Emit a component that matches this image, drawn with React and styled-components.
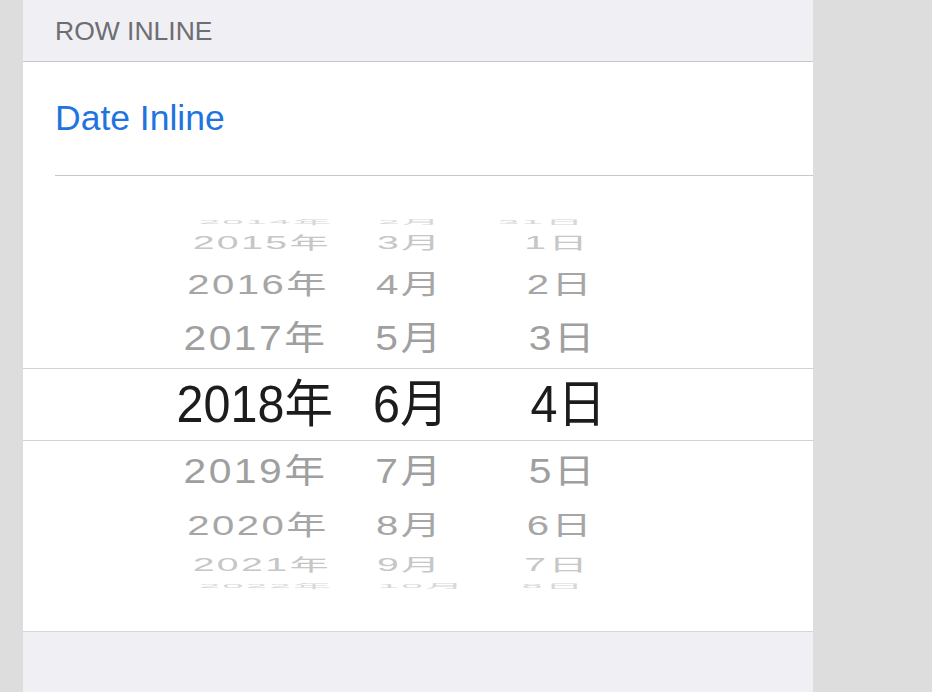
import React from 'react';
import styled, { createGlobalStyle } from 'styled-components';

const GlobalStyle = createGlobalStyle`
  html, body { margin: 0; padding: 0; background: #dddddd; }
  body { font-family: "Liberation Sans", "Noto Sans CJK JP", sans-serif; }
  * { box-sizing: border-box; }
`;

const Page = styled.div`
  width: 932px;
  height: 692px;
  background: #dddddd;
  overflow: hidden;
  display: flex;
`;

const Panel = styled.div`
  margin-left: 23px;
  width: 790px;
  height: 100%;
  background: #efeff4;
  display: flex;
  flex-direction: column;
`;

const SectionHeader = styled.div`
  height: 62px;
  border-bottom: 1px solid #c8c7cc;
  display: flex;
  align-items: center;
  padding-left: 32px;
  padding-top: 1px;
  font-size: 26.5px;
  color: #6d6d72;
`;

const Section = styled.div`
  background: #ffffff;
  border-bottom: 1px solid #d6d6da;
`;

const Cell = styled.div`
  height: 113px;
  display: flex;
  align-items: center;
  padding-left: 32px;
  font-size: 35.5px;
  color: #1f74de;
`;

const Separator = styled.div`
  height: 1px;
  margin-left: 32px;
  background: #c8c7cc;
`;

const Picker = styled.div`
  height: 455px;
  padding: 41px 0 39px;
`;

const Wheel = styled.div`
  height: 375px;
  overflow: hidden;
  display: flex;
  flex-direction: column;
`;

const WheelRow = styled.div`
  flex: 0 0 auto;
  display: flex;
  align-items: center;
  ${p => p.$selected && `
    border-top: 1px solid #d1d1d6;
    border-bottom: 1px solid #d1d1d6;
  `}
`;

const RowContent = styled.div`
  flex: 0 0 auto;
  width: 100%;
  display: grid;
  grid-template-columns: ${p => (p.$selected ? '310px 163px 110px 1fr' : '304px 168px 103px 1fr')};
  align-items: center;
  line-height: 1;
  white-space: nowrap;
  font-size: ${p => (p.$selected ? '48.5px' : '41px')};
  letter-spacing: ${p => (p.$selected ? '0' : '2.5px')};
  color: ${p => p.$color};
  transform-origin: 50% 50%;
`;

const YearCell = styled.span`
  text-align: right;
`;

const MonthCell = styled.span`
  text-align: left;
  padding-left: ${p => (p.$selected ? '40px' : '48px')};
`;

const DayCell = styled.span`
  text-align: right;
`;

const R = 183;
const STEP = 20;
const D = 2000;
const rad = d => (d * Math.PI) / 180;
const GREYS = { 20: '#9f9f9f', 40: '#a6a6a6', 60: '#c6c6c6', 80: '#d8d8d8' };

const days = [31, 1, 2, 3, 4, 5, 6, 7, 8];

const rows = [-4, -3, -2, -1, 0, 1, 2, 3, 4].map((i, idx) => {
  const a = Math.abs(i * STEP);
  const selected = i === 0;
  const height = selected ? 73 : R * (Math.sin(rad(a + 10)) - Math.sin(rad(a - 10)));
  const sx = D / (D + R * (1 - Math.cos(rad(a))));
  const sy = 0.9 * Math.cos(rad(a)) * sx;
  return {
    key: i,
    selected,
    height,
    transform: selected ? 'scaleY(1.05)' : `scale(${sx.toFixed(3)}, ${sy.toFixed(3)})`,
    color: selected ? '#1c1c1c' : GREYS[a],
    year: `${2018 + i}年`,
    month: `${6 + i}月`,
    day: `${days[idx]}日`,
  };
});

export default function App() {
  return (
    <Page>
      <GlobalStyle />
      <Panel>
        <SectionHeader>ROW INLINE</SectionHeader>
        <Section>
          <Cell>Date Inline</Cell>
          <Separator />
          <Picker>
            <Wheel>
              {rows.map(r => (
                <WheelRow key={r.key} $selected={r.selected} style={{ height: `${r.height}px` }}>
                  <RowContent
                    $selected={r.selected}
                    $color={r.color}
                    style={{ transform: r.transform }}
                  >
                    <YearCell>{r.year}</YearCell>
                    <MonthCell $selected={r.selected}>{r.month}</MonthCell>
                    <DayCell>{r.day}</DayCell>
                  </RowContent>
                </WheelRow>
              ))}
            </Wheel>
          </Picker>
        </Section>
      </Panel>
    </Page>
  );
}
